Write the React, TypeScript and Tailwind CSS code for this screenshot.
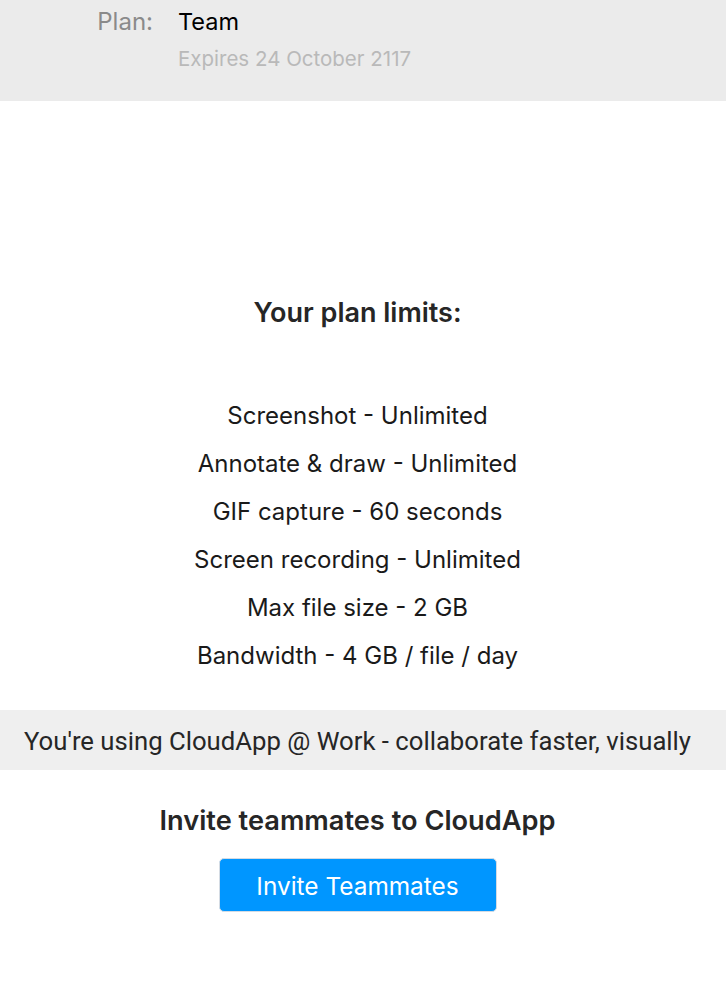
const limits = [
  "Screenshot - Unlimited",
  "Annotate & draw - Unlimited",
  "GIF capture - 60 seconds",
  "Screen recording - Unlimited",
  "Max file size - 2 GB",
  "Bandwidth - 4 GB / file / day",
];

export default function App() {
  return (
    <div className="min-h-[992px] w-[726px] bg-white font-['Inter',sans-serif] text-[#222]">
      {/* Plan header */}
      <div className="h-[101px] bg-[#ebebeb] flex">
        <div className="w-[153px] pt-[8px] text-right text-[24px] leading-[28px] text-[#8a8a8a]">
          Plan:
        </div>
        <div className="pl-[25px] pt-[8px]">
          <div className="text-[23.5px] leading-[28px] text-black">Team</div>
          <div className="mt-[9px] text-[20.5px] leading-[28px] text-[#b9b9b9]">
            Expires 24 October 2117
          </div>
        </div>
      </div>

      <div className="w-[715px]">
        {/* Limits */}
        <h2 className="mt-[197px] text-center text-[27px] leading-[30px] font-semibold text-[#262626]">
          Your plan limits:
        </h2>
        <ul className="mt-[64px] flex flex-col items-center">
          {limits.map((item) => (
            <li key={item} className="h-[48px] flex items-center text-[24px] text-[#1a1a1a]">
              {item}
            </li>
          ))}
        </ul>

        {/* Work banner */}
        <div className="mt-[30px] w-[726px] h-[60px] bg-[#efefef]">
          <div className="w-[715px] h-full pt-[3px] flex items-center justify-center text-[25.7px] text-[#262626] font-['Roboto',sans-serif]">
            You're using CloudApp @ Work - collaborate faster, visually
          </div>
        </div>

        {/* Invite */}
        <h3 className="mt-[36px] text-center text-[27.2px] leading-[30px] font-semibold text-[#262626]">
          Invite teammates to CloudApp
        </h3>
        <div className="mt-[22px] flex justify-center">
          <button className="w-[278px] h-[54px] pt-[2px] rounded-[5px] bg-[#0096ff] border border-[#d4dbe3] text-white text-[24.4px]">
            Invite Teammates
          </button>
        </div>
      </div>
    </div>
  );
}
